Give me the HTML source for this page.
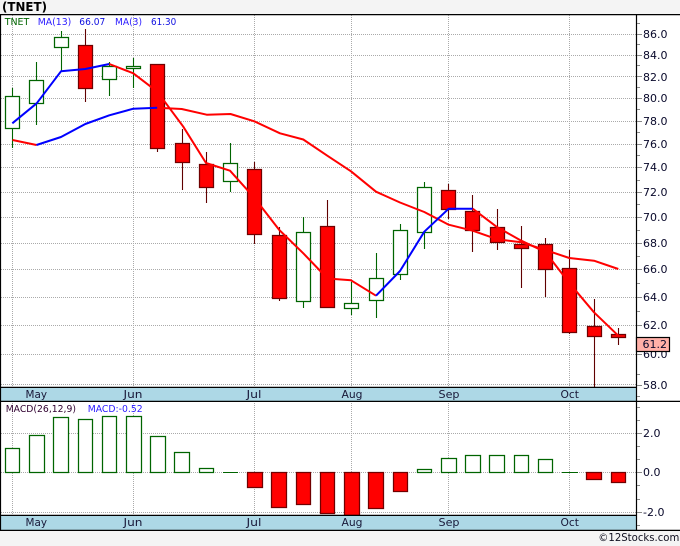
<!DOCTYPE html>
<html><head><meta charset="utf-8"><style>
html,body{margin:0;padding:0;background:#f4f4f4;width:680px;height:546px;overflow:hidden}
svg{display:block}
text{font-family:"DejaVu Sans",sans-serif;font-size:11px;fill:#08082a}
.m text{font-size:11px;fill:#181838}
.l text{font-size:10px}
.g{fill:#fff;stroke:#006400;stroke-width:1.25}
.r{fill:#f00;stroke:#700000;stroke-width:1.25}
.c{shape-rendering:crispEdges}
</style></head><body>
<svg width="680" height="546" viewBox="0 0 680 546" xmlns="http://www.w3.org/2000/svg">
<rect x="0" y="15" width="680" height="515" fill="#fff"/>
<g class="c" stroke="#aaa" stroke-width="1" stroke-dasharray="1 1" fill="none">
<path d="M1 34.5H636M1 55.5H636M1 76.5H636M1 98.5H636M1 121.5H636M1 144.5H636M1 167.5H636M1 192.5H636M1 217.5H636M1 243.5H636M1 269.5H636M1 297.5H636M1 325.5H636M1 354.5H636M1 384.5H636M1 433.5H636M1 472.5H636M1 512.5H636"/>
<path d="M12.5 15V387M133.5 15V387M254.5 15V387M351.5 15V387M448.5 15V387M569.5 15V387M12.5 401V515M133.5 401V515M254.5 401V515M351.5 401V515M448.5 401V515M569.5 401V515"/>
</g>
<g stroke-width="1.1" fill="none">
<path stroke="#006400" d="M12.5 88V148M36.5 62V125M61.5 31V71M109.5 62V96M133.5 58V88M230.5 143V192M303.5 217V308M351.5 282V315M376.5 253V318M400.5 224V280M424.5 182V249"/>
<path stroke="#600000" d="M85.5 29V102M157.5 64V152M182.5 129V190M206.5 152V203M254.5 162V244M279.5 227V301M327.5 200V307M448.5 184V219M472.5 195V252M497.5 209V250M521.5 226V288M545.5 238V297M569.5 250V334M594.5 299V387M618.5 328V345"/>
</g>
<g>
<rect class="g" x="5.5" y="96.5" width="14" height="32"/>
<rect class="g" x="29.5" y="80.5" width="14" height="23"/>
<rect class="g" x="54.5" y="37.5" width="14" height="10"/>
<rect class="r" x="78.5" y="45.5" width="14" height="43"/>
<rect class="g" x="102.5" y="66.5" width="14" height="13"/>
<rect class="g" x="126.5" y="66.5" width="14" height="2"/>
<rect class="r" x="150.5" y="64.5" width="14" height="84"/>
<rect class="r" x="175.5" y="143.5" width="14" height="19"/>
<rect class="r" x="199.5" y="164.5" width="14" height="23"/>
<rect class="g" x="223.5" y="163.5" width="14" height="18"/>
<rect class="r" x="247.5" y="169.5" width="14" height="65"/>
<rect class="r" x="272.5" y="235.5" width="14" height="63"/>
<rect class="g" x="296.5" y="232.5" width="14" height="69"/>
<rect class="r" x="320.5" y="226.5" width="14" height="81"/>
<rect class="g" x="344.5" y="303.5" width="14" height="5"/>
<rect class="g" x="369.5" y="278.5" width="14" height="22"/>
<rect class="g" x="393.5" y="230.5" width="14" height="44"/>
<rect class="g" x="417.5" y="187.5" width="14" height="45"/>
<rect class="r" x="441.5" y="190.5" width="14" height="19"/>
<rect class="r" x="465.5" y="211.5" width="14" height="19"/>
<rect class="r" x="490.5" y="227.5" width="14" height="15"/>
<rect class="r" x="514.5" y="244.5" width="14" height="4"/>
<rect class="r" x="538.5" y="244.5" width="14" height="25"/>
<rect class="r" x="562.5" y="268.5" width="14" height="64"/>
<rect class="r" x="587.5" y="326.5" width="14" height="10"/>
<rect class="r" x="611.5" y="334.5" width="14" height="3"/>
</g>
<g fill="none" stroke-width="2" stroke-linejoin="round">
<path stroke="#f00" d="M12.5 140L36.5 145"/>
<path stroke="#00f" d="M36.5 145L61 137L85.3 124L109.3 115.3L133.3 108.7L157.3 107.7"/>
<path stroke="#f00" d="M157.3 107.7L181.7 109L206.7 114.7L230.5 114L254.3 121.3L280 133.3L303.3 139.5L327.3 155.7L351 171.3L376 191.7L400 202.5L424.3 212L448.7 224.7L472.7 230.7L497.3 239.3L521.3 242.3L545.3 250L569.3 258L594 260.7L618.3 269"/>
<path stroke="#00f" d="M12.3 123.3L36.7 103.3L61 71.3L85.3 69L109.3 64"/>
<path stroke="#f00" d="M109.3 64L133.3 73.3L157.3 91.7L183.3 126.7L206 163L230 170.7L254.5 198L279.3 230L303.3 253.3L327.5 278.5L351 280.3L376 295.7"/>
<path stroke="#00f" d="M376 295.7L400 271L424.3 231.7L448.7 208.7L472.7 208.7"/>
<path stroke="#f00" d="M472.7 208.7L497.3 227.3L521.3 240.7L545.3 252L569.3 283L594 312.3L618.3 335.7"/>
</g>
<g>
<rect class="g" x="5.5" y="448.5" width="14" height="24"/>
<rect class="g" x="29.5" y="435.5" width="15" height="37"/>
<rect class="g" x="53.5" y="417.5" width="15" height="55"/>
<rect class="g" x="78.5" y="419.5" width="14" height="53"/>
<rect class="g" x="102.5" y="416.5" width="14" height="56"/>
<rect class="g" x="126.5" y="416.5" width="15" height="56"/>
<rect class="g" x="150.5" y="436.5" width="15" height="36"/>
<rect class="g" x="174.5" y="452.5" width="15" height="20"/>
<rect class="g" x="199.5" y="468.5" width="14" height="4"/>
<path d="M223 472.5H238M562 472.5H578" stroke="#006400" fill="none"/>
<rect class="r" x="247.5" y="472.5" width="15" height="15"/>
<rect class="r" x="271.5" y="472.5" width="15" height="35"/>
<rect class="r" x="296.5" y="472.5" width="14" height="32"/>
<rect class="r" x="320.5" y="472.5" width="14" height="41"/>
<rect class="r" x="344.5" y="472.5" width="15" height="43"/>
<rect class="r" x="368.5" y="472.5" width="15" height="36"/>
<rect class="r" x="393.5" y="472.5" width="14" height="19"/>
<rect class="g" x="417.5" y="469.5" width="14" height="3"/>
<rect class="g" x="441.5" y="458.5" width="15" height="14"/>
<rect class="g" x="465.5" y="455.5" width="15" height="17"/>
<rect class="g" x="489.5" y="455.5" width="15" height="17"/>
<rect class="g" x="514.5" y="455.5" width="14" height="17"/>
<rect class="g" x="538.5" y="459.5" width="14" height="13"/>
<rect class="r" x="586.5" y="472.5" width="15" height="7"/>
<rect class="r" x="611.5" y="472.5" width="14" height="10"/>
</g>
<g class="c">
<rect x="0" y="387" width="636" height="14" fill="#add8e6"/>
<rect x="0" y="515" width="636" height="15" fill="#add8e6"/>
</g>
<path fill="none" stroke="#000" stroke-width="1.2" d="M0 14.6H680M0 387.4H636M0 401.4H680M0 515.4H636M0 530.4H680M636.5 14V530M0.5 14V530"/>
<path class="c" fill="none" stroke="#888" stroke-width="1" d="M637 23.5H640M637 34.5H642M637 44.5H640M637 55.5H642M637 65.5H640M637 76.5H642M637 87.5H640M637 98.5H642M637 109.5H640M637 121.5H642M637 132.5H640M637 144.5H642M637 155.5H640M637 167.5H642M637 180.5H640M637 192.5H642M637 204.5H640M637 217.5H642M637 230.5H640M637 243.5H642M637 256.5H640M637 269.5H642M637 283.5H640M637 297.5H642M637 311.5H640M637 325.5H642M637 354.5H642M637 374.5H640M637 385.5H642M637 396.5H640M637 407.5H640M637 420.5H640M637 433.5H642M637 446.5H640M637 459.5H640M637 472.5H642M637 485.5H640M637 499.5H640M637 512.5H642M637 525.5H640"/>
<g>
<text x="643" y="38">86.0</text><text x="643" y="59">84.0</text><text x="643" y="81">82.0</text><text x="643" y="102">80.0</text>
<text x="643" y="125">78.0</text><text x="643" y="148">76.0</text><text x="643" y="171">74.0</text><text x="643" y="196">72.0</text>
<text x="643" y="221">70.0</text><text x="643" y="247">68.0</text><text x="643" y="273">66.0</text><text x="643" y="301">64.0</text>
<text x="643" y="329">62.0</text><text x="643" y="358">60.0</text><text x="643" y="389">58.0</text>
<text x="643" y="437">2.0</text><text x="643" y="476">0.0</text><text x="643" y="516">-2.0</text>
</g>
<rect x="636.5" y="337.5" width="33" height="14" fill="#ffb0a8" stroke="#000" stroke-width="1.2"/>
<text x="642.5" y="348">61.2</text>
<g class="m">
<text x="25.5" y="398" textLength="21.5" lengthAdjust="spacingAndGlyphs">May</text>
<text x="123.5" y="398" textLength="19" lengthAdjust="spacingAndGlyphs">Jun</text>
<text x="246.5" y="398" textLength="15" lengthAdjust="spacingAndGlyphs">Jul</text>
<text x="341.5" y="398" textLength="21" lengthAdjust="spacingAndGlyphs">Aug</text>
<text x="438.5" y="398" textLength="21" lengthAdjust="spacingAndGlyphs">Sep</text>
<text x="560.5" y="398" textLength="18.5" lengthAdjust="spacingAndGlyphs">Oct</text>
<text x="25.5" y="526" textLength="21.5" lengthAdjust="spacingAndGlyphs">May</text>
<text x="123.5" y="526" textLength="19" lengthAdjust="spacingAndGlyphs">Jun</text>
<text x="246.5" y="526" textLength="15" lengthAdjust="spacingAndGlyphs">Jul</text>
<text x="341.5" y="526" textLength="21" lengthAdjust="spacingAndGlyphs">Aug</text>
<text x="438.5" y="526" textLength="21" lengthAdjust="spacingAndGlyphs">Sep</text>
<text x="560.5" y="526" textLength="18.5" lengthAdjust="spacingAndGlyphs">Oct</text>
</g>
<g class="l">
<text x="4.7" y="25" textLength="24.6" lengthAdjust="spacingAndGlyphs" style="fill:#006400">TNET</text>
<text x="37.7" y="25" textLength="33.6" lengthAdjust="spacingAndGlyphs" style="fill:#2a1aff">MA(13)</text>
<text x="79.3" y="25" textLength="26" lengthAdjust="spacingAndGlyphs" style="fill:#1010e0">66.07</text>
<text x="115" y="25" textLength="27" lengthAdjust="spacingAndGlyphs" style="fill:#2a1aff">MA(3)</text>
<text x="151" y="25" textLength="25.3" lengthAdjust="spacingAndGlyphs" style="fill:#1010e0">61.30</text>
<text x="5.7" y="412" textLength="70.3" lengthAdjust="spacingAndGlyphs" style="fill:#300030">MACD(26,12,9)</text>
<text x="87.7" y="412" textLength="55" lengthAdjust="spacingAndGlyphs" style="fill:#2a1aff">MACD:-0.52</text>
</g>
<text x="2" y="11" style="font-size:12px;font-weight:bold;fill:#000" textLength="45" lengthAdjust="spacingAndGlyphs">(TNET)</text>
<text x="598.3" y="541" style="font-size:11px;fill:#101020" textLength="81" lengthAdjust="spacingAndGlyphs">©12Stocks.com</text>
</svg>
</body></html>
